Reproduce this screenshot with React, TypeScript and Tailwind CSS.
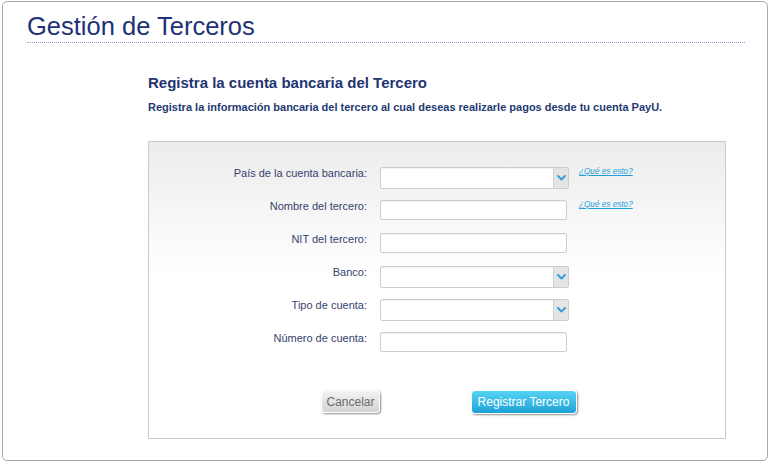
import React from "react";

const font = { fontFamily: '"Liberation Sans", Arial, sans-serif' };

function Chevron() {
  return (
    <svg width="9" height="6" viewBox="0 0 9 6" fill="none">
      <path d="M1 1l3.5 3.5L8 1" stroke="#2a9fd8" strokeWidth="1.8" strokeLinecap="round" strokeLinejoin="round" />
    </svg>
  );
}

function Select() {
  return (
    <div className="flex h-[22px] w-[189px] overflow-hidden rounded-[2px] border border-[#cdcdcd] bg-white shadow-[inset_0_1px_1px_rgba(0,0,0,0.06)]">
      <div className="flex-1" />
      <div className="flex w-[15px] items-center justify-center border-l border-[#d0d0d0] bg-[#e4e4e4]">
        <Chevron />
      </div>
    </div>
  );
}

function Input() {
  return (
    <div className="h-[20px] w-[187px] rounded-[2px] border border-[#cdcdcd] bg-white shadow-[inset_0_1px_1px_rgba(0,0,0,0.06)]" />
  );
}

function Link() {
  return (
    <span className="ml-[10px] text-[8.2px] italic leading-[10px] text-[#1e9fdc] underline">
      ¿Qué es esto?
    </span>
  );
}

function Row({ label, kind, link }: { label: string; kind: "select" | "input"; link?: boolean }) {
  return (
    <div className="flex h-[33px] items-start">
      <div className="w-[218px] text-right text-[11px] leading-[13px] text-[#363f6e]">{label}</div>
      <div className="ml-[13px] w-[189px]">{kind === "select" ? <Select /> : <Input />}</div>
      {link && <Link />}
    </div>
  );
}

export default function App() {
  return (
    <div className="h-[470px] w-[773px] bg-white pl-[2px] pt-[1px]" style={font}>
      <div className="h-[460px] w-[766px] rounded-[5px] border border-[#a9a9a9]">
        <div className="ml-[24px] mr-[22px] border-b border-dotted border-[#8c9bd6] pb-[1px] pt-[10px] text-[25.5px] leading-[29px] text-[#1f3275]">
          Gestión de Terceros
        </div>
        <div className="ml-[145px] mt-[31px] text-[15px] font-bold leading-[18px] text-[#1f3570]">
          Registra la cuenta bancaria del Tercero
        </div>
        <div className="ml-[145px] mt-[9px] text-[11px] font-bold leading-[13px] text-[#233a72]">
          Registra la información bancaria del tercero al cual deseas realizarle pagos desde tu cuenta PayU.
        </div>
        <div className="ml-[145px] mt-[27px] h-[298px] w-[578px] border border-[#c9c9c9] bg-linear-to-b from-[#ececec] to-white to-45% pt-[25px]">
          <Row label="País de la cuenta bancaria:" kind="select" link />
          <Row label="Nombre del tercero:" kind="input" link />
          <Row label="NIT del tercero:" kind="input" />
          <Row label="Banco:" kind="select" />
          <Row label="Tipo de cuenta:" kind="select" />
          <Row label="Número de cuenta:" kind="input" />
          <div className="mx-auto mt-[25px] grid w-[346px] grid-cols-2 justify-items-center">
            <button className="h-[23px] w-[59px] rounded-[4px] border border-white bg-linear-to-b from-[#f3f3f3] to-[#d3d3d3] text-[12px] text-[#6a6a6a] shadow-[1px_1px_2px_rgba(0,0,0,0.45)]">
              Cancelar
            </button>
            <button className="h-[24px] w-[106px] rounded-[4px] border border-white bg-linear-to-b from-[#55d3f4] to-[#1ba2d8] text-[12px] text-white shadow-[1px_1px_2px_rgba(0,0,0,0.45)]">
              Registrar Tercero
            </button>
          </div>
        </div>
      </div>
    </div>
  );
}
